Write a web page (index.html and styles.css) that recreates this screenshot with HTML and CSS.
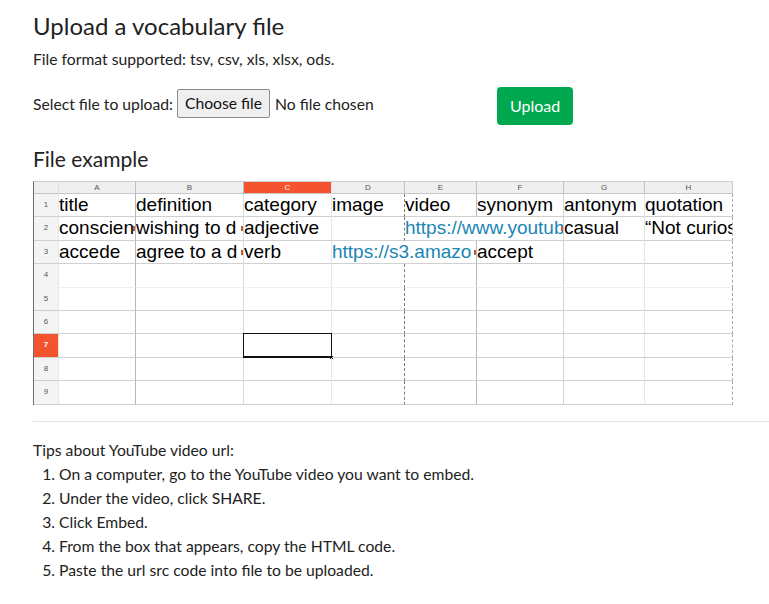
FILE: index.html
```html
<!DOCTYPE html>
<html lang="en">
<head>
<meta charset="utf-8">
<title>Upload a vocabulary file</title>
<link rel="stylesheet" href="styles.css">
</head>
<body>
<main class="page">
  <h1 class="title">Upload a vocabulary file</h1>
  <p class="formats">File format supported: tsv, csv, xls, xlsx, ods.</p>

  <form class="upload-row">
    <span class="upload-label">Select file to upload:</span>
    <span class="file-btn">Choose file</span>
    <span class="file-name">No file chosen</span>
    <button type="button" class="upload-btn">Upload</button>
  </form>

  <h2 class="subtitle">File example</h2>

  <div class="sheet">
    <!-- header row -->
    <div class="c hdr corner"></div>
    <div class="c hdr ca">A</div>
    <div class="c hdr cb">B</div>
    <div class="c hdr cc sel">C</div>
    <div class="c hdr cd">D</div>
    <div class="c hdr ce">E</div>
    <div class="c hdr cf">F</div>
    <div class="c hdr cg">G</div>
    <div class="c hdr ch">H</div>

    <!-- row 1 -->
    <div class="c rh">1</div>
    <div class="c ca">title</div>
    <div class="c cb">definition</div>
    <div class="c cc">category</div>
    <div class="c cd">image</div>
    <div class="c ce">video</div>
    <div class="c cf">synonym</div>
    <div class="c cg">antonym</div>
    <div class="c ch">quotation</div>

    <!-- row 2 -->
    <div class="c rh">2</div>
    <div class="c ca clip">conscien<i class="mk"></i></div>
    <div class="c cb clip">wishing to d<i class="mk"></i></div>
    <div class="c cc">adjective</div>
    <div class="c cd"></div>
    <div class="c cf span2 link clip">https://www.youtub<i class="mk"></i></div>
    <div class="c cg">casual</div>
    <div class="c ch">“Not curios</div>

    <!-- row 3 -->
    <div class="c rh">3</div>
    <div class="c ca">accede</div>
    <div class="c cb clip">agree to a d<i class="mk"></i></div>
    <div class="c cc">verb</div>
    <div class="c ce span2 link clip">https://s3.amazo<i class="mk"></i></div>
    <div class="c cf">accept</div>
    <div class="c cg"></div>
    <div class="c ch"></div>

    <!-- rows 4-9 -->
    <div class="c rh faint">4</div>
    <div class="c ca faint"></div><div class="c cb faint"></div><div class="c cc faint"></div><div class="c cd faint"></div><div class="c ce faint"></div><div class="c cf faint"></div><div class="c cg faint"></div><div class="c ch faint"></div>

    <div class="c rh">5</div>
    <div class="c ca"></div><div class="c cb"></div><div class="c cc"></div><div class="c cd"></div><div class="c ce"></div><div class="c cf"></div><div class="c cg"></div><div class="c ch"></div>

    <div class="c rh">6</div>
    <div class="c ca"></div><div class="c cb"></div><div class="c cc"></div><div class="c cd"></div><div class="c ce"></div><div class="c cf"></div><div class="c cg"></div><div class="c ch"></div>

    <div class="c rh sel">7</div>
    <div class="c ca"></div><div class="c cb"></div><div class="c cc active"></div><div class="c cd"></div><div class="c ce"></div><div class="c cf"></div><div class="c cg"></div><div class="c ch"></div>

    <div class="c rh">8</div>
    <div class="c ca"></div><div class="c cb"></div><div class="c cc"></div><div class="c cd"></div><div class="c ce"></div><div class="c cf"></div><div class="c cg"></div><div class="c ch"></div>

    <div class="c rh">9</div>
    <div class="c ca"></div><div class="c cb"></div><div class="c cc"></div><div class="c cd"></div><div class="c ce"></div><div class="c cf"></div><div class="c cg"></div><div class="c ch"></div>
  </div>

  <hr class="divider">

  <section class="tips">
    <p class="tips-title">Tips about YouTube video url:</p>
    <ol class="tips-list">
      <li>On a computer, go to the YouTube video you want to embed.</li>
      <li>Under the video, click SHARE.</li>
      <li>Click Embed.</li>
      <li>From the box that appears, copy the HTML code.</li>
      <li>Paste the url src code into file to be uploaded.</li>
    </ol>
  </section>
</main>
</body>
</html>
```
FILE: styles.css
```css
* { box-sizing: border-box; }

html, body {
  margin: 0;
  padding: 0;
  background: #fff;
}

body {
  font-family: Lato, "Open Sans", sans-serif;
  color: #222;
  font-size: 15.7px;
}

.page {
  padding: 11px 0 0 33px;
}

.title {
  margin: 0;
  font-size: 24px;
  line-height: 29px;
  font-weight: 400;
  color: #222;
}

.formats {
  margin: 8px 0 0;
  line-height: 22px;
}

.upload-row {
  display: flex;
  align-items: flex-start;
  margin-top: 17px;
  height: 38px;
}

.upload-label {
  margin-top: 6px;
  line-height: 22px;
}

.file-btn {
  margin: 2px 0 0 4px;
  height: 29px;
  padding: 0 7px;
  line-height: 27px;
  background: #efefef;
  border: 1px solid #8a8a8a;
  border-radius: 2px;
  color: #111;
}

.file-name {
  margin: 6px 0 0 5px;
  line-height: 22px;
  width: 222px;
}

.upload-btn {
  height: 38px;
  width: 76px;
  padding: 0;
  border: none;
  border-radius: 4px;
  background: #00a84f;
  color: #fff;
  font-family: Lato, sans-serif;
  font-size: 16px;
  line-height: 38px;
}

.subtitle {
  margin: 21px 0 0;
  font-size: 21px;
  line-height: 25px;
  font-weight: 400;
  color: #222;
}

/* spreadsheet */
.sheet {
  margin-top: 10px;
  display: grid;
  grid-template-columns: 25px 77px 108px 88px 73px 72px 87px 81px 88px;
  grid-template-rows: 12px 23px 24px 23px 24px 23px 23px 24px 23px 24px;
  width: 700px;
  border-left: 1px solid #6b6b6b;
  border-top: 1px solid #cfcfcf;
  font-family: "Liberation Sans", Arial, sans-serif;
  font-size: 19px;
  color: #000;
}

.c {
  position: relative;
  border-right: 1px solid #ddd;
  border-bottom: 1px solid #d0d0d0;
  padding-left: 0;
  line-height: 22px;
  white-space: nowrap;
  overflow: hidden;
}

.hdr {
  background: #efefef;
  font-size: 8px;
  line-height: 11px;
  color: #555;
  text-align: center;
  padding: 0;
  border-bottom-color: #c6c6c6;
}

.rh {
  background: #f4f4f4;
  font-size: 8px;
  color: #555;
  text-align: center;
  padding: 0;
  border-right-color: #e6e6e6;
}

.sel {
  background: #f4532f;
  color: #fff;
  font-weight: 700;
}

.hdr.sel { font-weight: 400; }

.ca { border-right-color: #b8b8b8; }
.cb { border-right-color: #dcdcdc; }
.cc { border-right-color: #e8e8e8; }
.cd { border-right: 1px dashed #7c7c7c; }
.ce { border-right-color: #bcbcbc; }
.cf { border-right-color: #d4d4d4; }
.cg { border-right-color: #e6e6e6; }
.ch { border-right: 1px dashed #a8a8a8; }

.hdr.ca, .hdr.cb, .hdr.cd, .hdr.ce, .hdr.cf, .hdr.cg { border-right: 1px solid #c0c0c0; }
.hdr.ch { border-right: 1px solid #c8c8c8; }

.faint { border-bottom-color: #f0f0f0; }

.span2 { grid-column: span 2; }
.cf.span2 { grid-column: 6 / span 2; border-right-color: #d4d4d4; }
.ce.span2 { grid-column: 5 / span 2; border-right-color: #bcbcbc; }

.link { color: #1a86b3; }

.mk {
  position: absolute;
  right: 0;
  top: 9px;
  width: 2px;
  height: 5px;
  background: #b85c3a;
}

.active::before {
  content: "";
  position: absolute;
  left: -1px;
  top: -1px;
  right: -1px;
  bottom: -1px;
  border: 1px solid #111;
  border-bottom-width: 2px;
}

.active { overflow: visible; }

.active::after {
  content: "";
  position: absolute;
  right: -2px;
  bottom: -2px;
  width: 3px;
  height: 3px;
  background: #111;
}

.divider {
  margin: 16px 0 0;
  border: none;
  border-top: 1px solid #e4e4e4;
  height: 0;
}

.tips {
  margin-top: 16px;
  line-height: 24px;
}

.tips-title {
  margin: 0;
}

.tips-list {
  margin: 0;
  padding-left: 26px;
}
```
